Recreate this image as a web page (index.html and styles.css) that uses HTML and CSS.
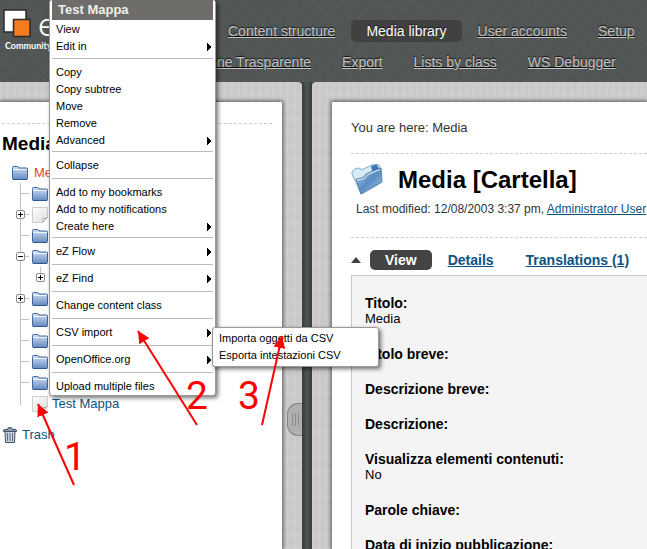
FILE: index.html
```
<!DOCTYPE html>
<html lang="it">
<head>
<meta charset="utf-8">
<title>Media [Cartella]</title>
<link rel="stylesheet" href="styles.css">
</head>
<body>
<svg class="defs" aria-hidden="true">
  <defs>
    <linearGradient id="blue" x1="0" y1="0" x2="0" y2="1">
      <stop offset="0" stop-color="#d3e1f2"/><stop offset="1" stop-color="#6489bf"/>
    </linearGradient>
    <linearGradient id="deep" x1="0" y1="0" x2="1" y2="1">
      <stop offset="0" stop-color="#b4d0ec"/><stop offset=".5" stop-color="#5c8cc6"/><stop offset="1" stop-color="#9cc0e4"/>
    </linearGradient>
    <linearGradient id="paper" x1="0" y1="0" x2="1" y2="1">
      <stop offset="0" stop-color="#fdfdfd"/><stop offset="1" stop-color="#dedede"/>
    </linearGradient>
    <symbol id="folder" viewBox="0 0 16 16">
      <path d="M.5 3.500V2.500q0-1 1-1h4q1 0 1.500 1.500h7.500q1 0 1 1V13.500q0 1-1 1h-13q-1 0-1-1z" fill="url(#blue)" stroke="#3d669f"/>
      <path d="M1 4.500h14" stroke="#f2f7fc"/><path d="M1 14.500h14" stroke="#2c5793"/>
    </symbol>
    <symbol id="page" viewBox="0 0 16 16">
      <path d="M.5.5h15v10l-5 5H.5z" fill="url(#paper)" stroke="#cfcfcf"/>
      <path d="M10.500 15.500q1-2 .5-4 2 .5 4.500-1z" fill="#fff" stroke="#aaa"/>
    </symbol>
  </defs>
</svg>

<header class="header">
  <a class="logo" href="#">
    <span class="logo-row">
      <svg width="29" height="30" viewBox="0 0 29 30" aria-hidden="true">
        <path d="M1 1h22v22H1z" fill="#fff" stroke="#2b2b2b" stroke-width="1.500"/>
        <path d="M10.500 10.500h16.500v17H10.500z" fill="#f47b20" stroke="#2b2b2b" stroke-width="1.500"/>
      </svg>
      <span class="logo-name">eZ</span>
    </span>
    <span class="logo-edition">Community</span>
  </a>
  <nav class="nav">
    <div class="nav-row">
      <a href="#">Content structure</a>
      <a href="#" class="current">Media library</a>
      <a href="#">User accounts</a>
      <a href="#">Setup</a>
    </div>
    <div class="nav-row nav-second">
      <a href="#">Amministrazione Trasparente</a>
      <a href="#">Export</a>
      <a href="#">Lists by class</a>
      <a href="#">WS Debugger</a>
    </div>
  </nav>
</header>

<div class="columns">
  <aside class="side linen">
    <div class="sheet side-sheet">
      <h2>Media library</h2>
      <div class="root"><svg class="icon"><use href="#folder"/></svg><a href="#">Media</a></div>
      <ul class="tree">
        <li><span class="slot"></span><svg class="icon"><use href="#folder"/></svg></li>
        <li><button class="toggle plus" aria-label="Expand"></button><svg class="icon"><use href="#page"/></svg></li>
        <li><span class="slot"></span><svg class="icon"><use href="#folder"/></svg></li>
        <li><button class="toggle" aria-label="Collapse"></button><svg class="icon"><use href="#folder"/></svg></li>
        <li class="nested"><button class="toggle plus" aria-label="Expand"></button></li>
        <li><button class="toggle plus" aria-label="Expand"></button><svg class="icon"><use href="#folder"/></svg></li>
        <li><span class="slot"></span><svg class="icon"><use href="#folder"/></svg></li>
        <li><span class="slot"></span><svg class="icon"><use href="#folder"/></svg></li>
        <li><span class="slot"></span><svg class="icon"><use href="#folder"/></svg></li>
        <li><span class="slot"></span><svg class="icon"><use href="#folder"/></svg></li>
        <li><span class="slot"></span><svg class="icon"><use href="#page"/></svg><a href="#">Test Mappa</a></li>
      </ul>
      <a class="trash" href="#">
        <svg width="14" height="16" viewBox="0 0 14 16" aria-hidden="true">
          <path d="M2 4.500h10l-.5 11h-9z" fill="#c9d3dd" stroke="#3d4f63"/>
          <path d="M4.500 6v8M7 6v8M9.500 6v8" stroke="#5c7085"/>
          <path d="M.5 4.500v-1q0-1 1.500-1h2.500q0-2 2.500-2t2.500 2H12q1.500 0 1.500 1v1z" fill="#8fa1b3" stroke="#3d4f63"/>
        </svg>Trash</a>
    </div>
    <button class="handle" aria-label="Hide panel"><i></i><i></i><i></i></button>
  </aside>
  <div class="divider"></div>
  <main class="main linen">
    <div class="sheet main-sheet">
      <p class="path">You are here: Media</p>
      <section class="heading">
        <div class="title">
          <svg width="32" height="32" viewBox="0 0 32 32" aria-hidden="true">
            <path d="M11 31l17-10 3-17-2-1z" fill="#bbb" opacity=".5"/>
            <path d="M1 10q-1-3 3-5l3-1q3 0 3 2L21 1l5-1 2 1 1 3L10 30z" fill="#d6ebf5" stroke="#6c9db8" stroke-width=".8"/>
            <path d="M20 2l6-1.500L28 5l-7 2z" fill="#3f78b6"/>
            <path d="M5 15q4 0 8-2 1-3 4-4L30 4l1 14-21 12z" fill="url(#deep)" stroke="#44759f" stroke-width=".8"/>
            <path d="M6 16q4 0 8-2 1-3 4-4l11-4.500" fill="none" stroke="#e8f4fc"/>
          </svg>
          <h1>Media [Cartella]</h1>
        </div>
        <p class="modified">Last modified: 12/08/2003 3:37 pm, <a href="#">Administrator User</a> (</p>
      </section>
      <nav class="tabs">
        <span class="arrow"></span>
        <a href="#" class="active">View</a>
        <a href="#">Details</a>
        <a href="#">Translations (1)</a>
      </nav>
      <dl class="fields">
        <div><dt>Titolo:</dt><dd>Media</dd></div>
        <div><dt>Titolo breve:</dt></div>
        <div><dt>Descrizione breve:</dt></div>
        <div><dt>Descrizione:</dt></div>
        <div><dt>Visualizza elementi contenuti:</dt><dd>No</dd></div>
        <div><dt>Parole chiave:</dt></div>
        <div><dt>Data di inizio pubblicazione:</dt></div>
      </dl>
    </div>
  </main>
</div>

<div class="popup menu">
  <h3>Test Mappa</h3>
  <div class="group first"><a href="#">View</a><a href="#" class="more">Edit in</a></div>
  <div class="group"><a href="#">Copy</a><a href="#">Copy subtree</a><a href="#">Move</a><a href="#">Remove</a><a href="#" class="more">Advanced</a></div>
  <div class="group single"><a href="#">Collapse</a></div>
  <div class="group"><a href="#">Add to my bookmarks</a><a href="#">Add to my notifications</a><a href="#" class="more">Create here</a></div>
  <div class="group single"><a href="#" class="more">eZ Flow</a></div>
  <div class="group single"><a href="#" class="more">eZ Find</a></div>
  <div class="group single"><a href="#">Change content class</a></div>
  <div class="group single"><a href="#" class="more">CSV import</a></div>
  <div class="group single"><a href="#" class="more">OpenOffice.org</a></div>
  <div class="group single"><a href="#">Upload multiple files</a></div>
</div>
<div class="popup submenu"><a href="#">Importa oggetti da CSV</a><a href="#">Esporta intestazioni CSV</a></div>

<svg class="notes" width="300" height="500" viewBox="0 0 300 500">
  <defs>
    <marker id="tip" viewBox="0 0 12 12" refX="12" refY="6" markerWidth="12" markerHeight="12" markerUnits="userSpaceOnUse" orient="auto"><path d="M12 6L0 0v12z"/></marker>
  </defs>
  <path class="line" d="M74 485L38 404"/>
  <path class="line" d="M197 425L138 331"/>
  <path class="line" d="M262 425L282 336"/>
  <text x="64" y="470">1</text>
  <text x="186" y="409">2</text>
  <text x="238" y="409">3</text>
</svg>
</body>
</html>
```
FILE: styles.css
```
* { box-sizing: border-box; }
body {
  margin: 0;
  height: 100vh;
  display: flex;
  flex-direction: column;
  overflow: hidden;
  position: relative;
  font: 13px/16px "Liberation Sans", Arial, sans-serif;
  color: #333;
}
h1, h2, h3, p, ul, dl, dd { margin: 0; padding: 0; }
.defs { position: absolute; width: 0; height: 0; }
a { color: #0d5280; }

.header {
  flex: none;
  height: 82px;
  display: flex;
  background:
    repeating-linear-gradient(45deg, rgba(0, 0, 0, .03) 0 1px, transparent 1px 3px),
    repeating-linear-gradient(-45deg, rgba(255, 255, 255, .02) 0 1px, transparent 1px 4px),
    #525654;
}
.logo {
  flex: none;
  width: 114px;
  padding: 9px 0 0 3px;
  color: #fff;
  text-decoration: none;
}
.logo-row { display: flex; gap: 6px; height: 30px; }
.logo-name { font: 300 31px/31px Inter, sans-serif; }
.logo-edition { display: block; padding-left: 2px; font: 700 9px/14px Lato, sans-serif; }
.nav { flex: 1; min-width: 0; padding-top: 20px; }
.nav-row { display: flex; gap: 1px; padding-left: 99px; margin-bottom: 9px; }
.nav-second { padding-left: 0; }
.nav-row a {
  flex: none;
  padding: 0 15px;
  font-size: 14px;
  line-height: 22px;
  color: #c4c4c4;
  text-shadow: 0 -1px 1px #111;
}
.nav-row .current {
  background: #414141;
  border-radius: 5px;
  color: #fff;
  text-decoration: none;
}

.columns {
  flex: 1;
  min-height: 0;
  display: grid;
  grid-template-columns: 302px 10px minmax(0, 1fr);
  background: #3d4341;
}
.linen {
  background:
    repeating-linear-gradient(90deg, rgba(255, 255, 255, .1) 0 1px, transparent 1px 3px, rgba(0, 0, 0, .01) 3px 5px, transparent 5px 7px),
    repeating-linear-gradient(0deg, rgba(255, 255, 255, .1) 0 1px, transparent 1px 5px, rgba(0, 0, 0, .01) 5px 7px, transparent 7px 13px),
    #cccaca;
  overflow: hidden;
}
.sheet { background: #fff; box-shadow: 0 0 4px 1px #555; height: 100%; }
.side { position: relative; padding: 20px 20px 0 0; border-radius: 0 4px 0 0; }
.main { padding: 20px 0 0 20px; border-radius: 4px 0 0 0; }
.divider { background: linear-gradient(90deg, #353b39, #4b5250 40%, #4b5250 60%, #353b39); }

.side-sheet { padding: 21px 10px 0 2px; }
.side h2 {
  border-top: 1px dashed #ccc;
  padding-top: 9px;
  font-size: 19px;
  line-height: 22px;
  color: #000;
}
.icon { flex: none; width: 16px; height: 16px; margin-right: 4px; }
.root { display: flex; align-items: center; height: 21px; margin-top: 7px; padding-left: 10px; }
.root .icon { margin-right: 6px; }
.root a { color: #dd4814; }
.side-sheet a { text-decoration: none; }
.tree { list-style: none; margin-left: -2px; }
.tree li {
  display: flex;
  align-items: center;
  height: 21px;
  padding-left: 16px;
  background:
    linear-gradient(#c4c3b9, #c4c3b9) 20px 0 / 1px 100% no-repeat,
    linear-gradient(#c4c3b9, #c4c3b9) 21px 10px / 8px 1px no-repeat;
}
.tree li:last-child { background: linear-gradient(#c4c3b9, #c4c3b9) 20px 0 / 1px 12px no-repeat; }
.tree .nested {
  padding-left: 36px;
  background:
    linear-gradient(#c4c3b9, #c4c3b9) 20px 0 / 1px 100% no-repeat,
    linear-gradient(#c4c3b9, #c4c3b9) 40px 0 / 1px 8px no-repeat;
}
.slot, .toggle { flex: none; width: 9px; height: 9px; margin-right: 7px; }
.toggle {
  padding: 0;
  border: 1px solid #8a8a8a;
  border-radius: 2px;
  background: linear-gradient(#000, #000) center / 5px 1px no-repeat, #fff;
}
.plus {
  background:
    linear-gradient(#000, #000) center / 5px 1px no-repeat,
    linear-gradient(#000, #000) center / 1px 5px no-repeat,
    #fff;
}
.trash { display: flex; align-items: center; gap: 5px; margin-top: 11px; padding-left: 1px; height: 20px; }
.handle {
  position: absolute;
  right: 0;
  top: 321px;
  width: 15px;
  height: 33px;
  display: flex;
  align-items: center;
  justify-content: center;
  gap: 2px;
  padding: 0;
  border: 1px solid #868686;
  border-right: 0;
  border-radius: 11px 0 0 11px;
  background: #b0b0b0;
}
.handle i { width: 1px; height: 13px; background: #8c8c8c; }

.main-sheet { padding: 18px 0 0 19px; }
.path { padding-bottom: 17px; }
.heading { height: 85px; border: dashed #ccc; border-width: 1px 0; padding-top: 9px; }
.title { display: flex; align-items: center; gap: 15px; height: 33px; }
h1 { font-size: 24px; line-height: 32px; color: #000; }
.modified { padding: 5px 0 0 5px; font-size: 12px; white-space: nowrap; }
.tabs { display: flex; align-items: center; height: 20px; margin: 12px 0 5px; gap: 32px; }
.tabs a { font-size: 14px; font-weight: bold; line-height: 20px; white-space: nowrap; }
.tabs .active {
  margin: 0 -16px 0 -23px;
  padding: 0 15px;
  border-radius: 5px;
  background: #444;
  color: #fff;
  text-decoration: none;
}
.arrow { width: 10px; border: 5px solid transparent; border-top: 0; border-bottom: 6px solid #3c434b; }
.fields {
  border: 1px solid #c6c6c6;
  border-right: 0;
  background: #f4f4f4;
  padding: 19px 0 40px 13px;
  color: #000;
}
.fields div { margin-bottom: 19px; }
dt { font-size: 14px; font-weight: bold; }
.fields dd { font-size: 13px; }

.popup {
  position: absolute;
  background: #fff;
  border: 1px solid #999;
  border-radius: 3px;
  box-shadow: 2px 2px 4px rgba(0, 0, 0, .55);
}
.popup a {
  display: block;
  padding-left: 4px;
  font-size: 11px;
  line-height: 17px;
  color: #000;
  text-decoration: none;
}
.menu { left: 49px; top: 0; width: 167px; padding: 0 2px; border-top: 0; }
.menu h3 { padding: 0 0 0 6px; background: #6f6d69; color: #eee; font-size: 13px; line-height: 20px; }
.group { padding: 5px 0 2px; border-bottom: 1px solid #bbb; }
.first { padding: 1px 0 3px; }
.single { padding: 5px 0 4px; }
.group:last-child { border: 0; padding-bottom: 0; }
.menu .more {
  background:
    linear-gradient(to top right, #000 50%, transparent 50%) right 1px top 5px / 5px 4px no-repeat,
    linear-gradient(to bottom right, #000 50%, transparent 50%) right 1px top 9px / 5px 4px no-repeat;
}
.submenu { left: 212px; top: 327px; width: 167px; padding: 2px; }
.submenu a { padding-left: 4px; }

.notes { position: absolute; left: 0; top: 0; pointer-events: none; fill: #f00; }
.notes .line { stroke: #f00; stroke-width: 2; marker-end: url(#tip); }
.notes text { font: 39px Roboto, sans-serif; }
```
